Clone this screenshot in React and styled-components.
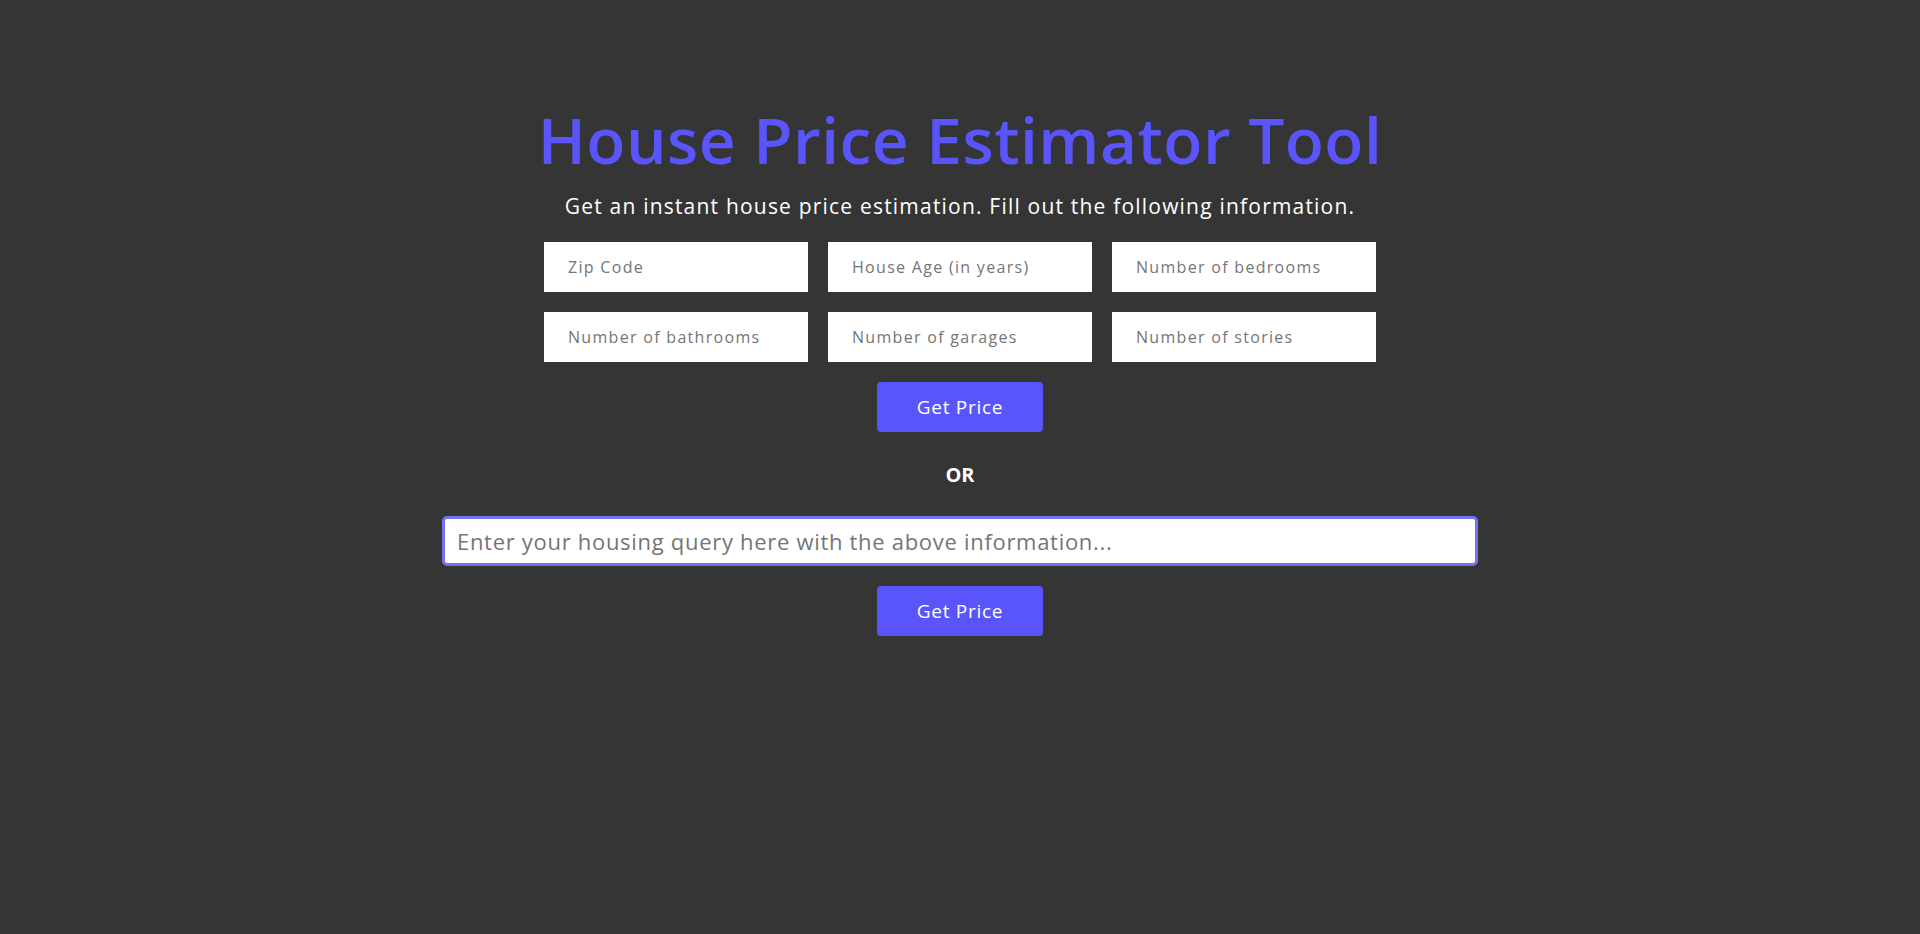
import React, { useState } from 'react';
import styled, { createGlobalStyle } from 'styled-components';

const GlobalStyle = createGlobalStyle`
  html, body {
    margin: 0;
    padding: 0;
    background: #353535;
    font-family: 'Open Sans', 'Liberation Sans', sans-serif;
  }
  * {
    box-sizing: border-box;
  }
`;

const fields = [
  'Zip Code',
  'House Age (in years)',
  'Number of bedrooms',
  'Number of bathrooms',
  'Number of garages',
  'Number of stories',
];

const App = () => {
  const [values, setValues] = useState({});
  const [query, setQuery] = useState('');

  return (
    <Page>
      <GlobalStyle />
      <Title>House Price Estimator Tool</Title>
      <Subtitle>Get an instant house price estimation. Fill out the following information.</Subtitle>
      <FieldGrid>
        {fields.map((label) => (
          <FieldInput
            key={label}
            placeholder={label}
            value={values[label] || ''}
            onChange={(e) => setValues({ ...values, [label]: e.target.value })}
          />
        ))}
      </FieldGrid>
      <PriceButton>Get Price</PriceButton>
      <Divider>OR</Divider>
      <QueryInput
        placeholder="Enter your housing query here with the above information..."
        value={query}
        onChange={(e) => setQuery(e.target.value)}
      />
      <PriceButton>Get Price</PriceButton>
    </Page>
  );
};

const Page = styled.div`
  min-height: 934px;
  display: flex;
  flex-direction: column;
  align-items: center;
  padding-top: 100px;
  color: #ffffff;
`;

const Title = styled.h1`
  margin: 0;
  font-size: 64px;
  line-height: 80px;
  font-weight: 600;
  letter-spacing: 0.5px;
  color: #5a55fb;
`;

const Subtitle = styled.p`
  margin: 11px 0 21px;
  font-size: 21px;
  line-height: 30px;
  letter-spacing: 1.2px;
  color: #ffffff;
`;

const FieldGrid = styled.div`
  display: grid;
  grid-template-columns: repeat(3, 264px);
  gap: 20px;
`;

const FieldInput = styled.input`
  height: 50px;
  border: none;
  border-radius: 0;
  padding: 0 24px;
  font-family: inherit;
  font-size: 16px;
  letter-spacing: 1.3px;
  color: #333333;
  background: #ffffff;
  outline: none;

  &::placeholder {
    color: #757575;
  }
`;

const PriceButton = styled.button`
  margin-top: 20px;
  width: 166px;
  height: 50px;
  border: none;
  border-radius: 4px;
  background: #5a55fb;
  color: #ffffff;
  font-family: inherit;
  font-size: 19px;
  letter-spacing: 0.7px;
  cursor: pointer;
`;

const Divider = styled.div`
  height: 84px;
  display: flex;
  align-items: center;
  justify-content: center;
  font-size: 20px;
  font-weight: 700;
  color: #ffffff;
`;

const QueryInput = styled.input`
  width: 1036px;
  height: 50px;
  border: 3px solid #7373f2;
  border-radius: 5px;
  padding: 0 12px;
  font-family: inherit;
  font-size: 22px;
  letter-spacing: 0.7px;
  color: #333333;
  background: #ffffff;
  outline: none;

  &::placeholder {
    color: #757575;
  }
`;

export default App;
